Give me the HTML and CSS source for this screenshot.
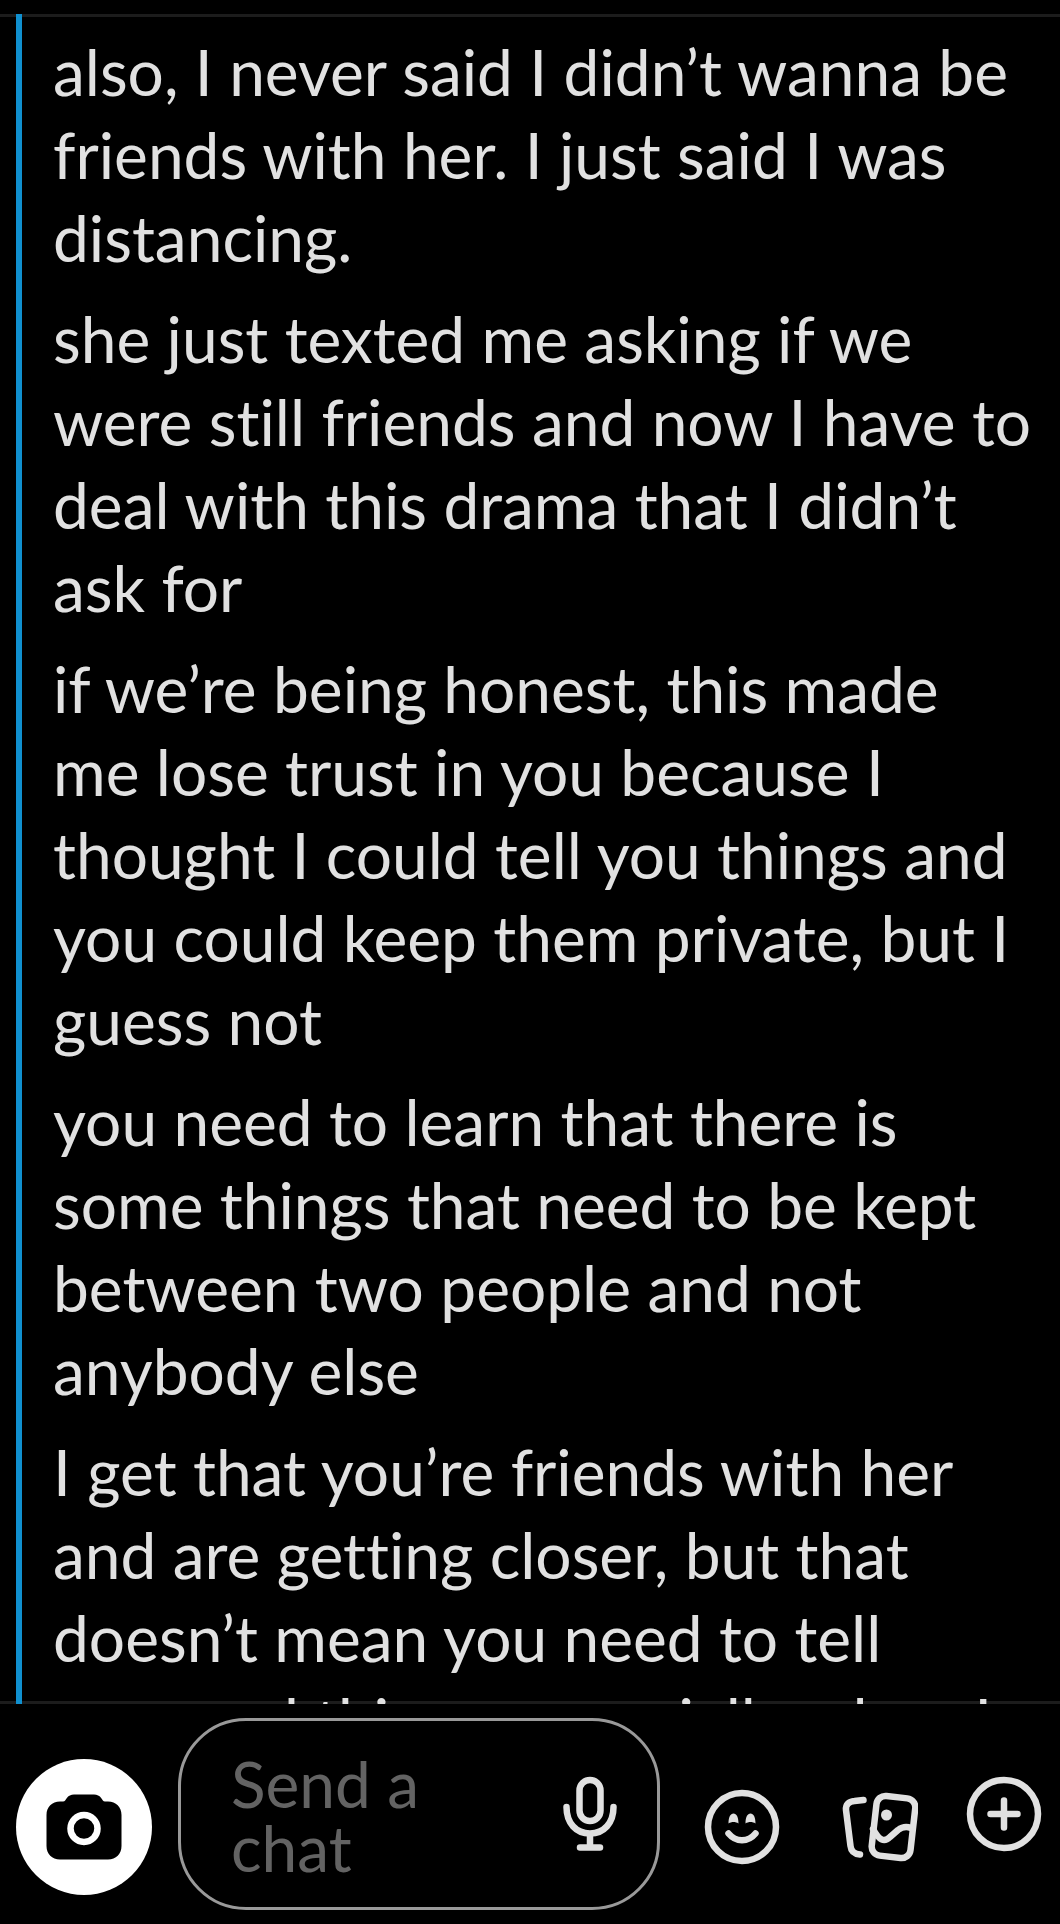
FILE: index.html
```html
<!DOCTYPE html>
<html lang="en">
<head>
    <meta charset="UTF-8">
    <meta name="viewport" content="width=device-width, initial-scale=1.0">
    <title>Chat</title>
    <link rel="stylesheet" href="styles.css">
</head>
<body>
    <main class="thread">
        <div class="messages">
            <p>also, I never said I didn’t wanna be<br>friends with her. I just said I was<br>distancing.</p>
            <p>she just texted me asking if we<br>were still friends and now I have to<br>deal with this drama that I didn’t<br>ask for</p>
            <p>if we’re being honest, this made<br>me lose trust in you because I<br>thought I could tell you things and<br>you could keep them private, but I<br>guess not</p>
            <p>you need to learn that there is<br>some things that need to be kept<br>between two people and not<br>anybody else</p>
            <p>I get that you’re friends with her<br>and are getting closer, but that<br>doesn’t mean you need to tell<br>your and things, especially when I</p>
        </div>
    </main>
    <form class="composer">
        <button type="button" class="camera-button low" aria-label="Camera">
            <svg width="76" height="66" viewBox="0 0 76 66">
                <path d="M14 7.500H17C19 7.500 19.500 6 20.500 4.500C22.500 1.500 25 .5 28 .5H48C51 .5 53.500 1.500 55.500 4.500C56.500 6 57 7.500 59 7.500H62C70 7.500 75.500 13 75.500 21V52C75.500 60 70 65.500 62 65.500H14C6 65.500 .5 60 .5 52V21C.5 13 6 7.500 14 7.500Z" fill="#000"/>
                <circle cx="38" cy="34.500" r="13.500" fill="none" stroke="#fff" stroke-width="6.500"/>
            </svg>
        </button>
        <div class="chat-box">
            <textarea class="chat-input" rows="2" placeholder="Send a chat" aria-label="Send a chat"></textarea>
            <button type="button" class="icon-button mic-button" aria-label="Voice note">
                <svg width="54" height="76" viewBox="0 0 54 76">
                    <rect x="16.500" y="4" width="21" height="41" rx="10.500"/>
                    <path d="M3.500 31C3.500 47 13 57.500 27 57.500S50.500 47 50.500 31M27 58V71M17 71.500H37"/>
                </svg>
            </button>
        </div>
        <div class="actions">
            <div class="media-actions low">
                <button type="button" class="icon-button" aria-label="Emoji">
                    <svg width="76" height="76" viewBox="0 0 76 76">
                        <circle cx="38" cy="38" r="34"/>
                        <path d="M24.500 44.500C32 53.500 44 53.500 51.500 44.500"/>
                        <path class="solid" d="M24.500 34.500C24.500 28 26.500 24.500 29.500 24.500S34.500 28 34.500 34.500C31.500 32.500 27.500 32.500 24.500 34.500ZM41.500 34.500C41.500 28 43.500 24.500 46.500 24.500S51.500 28 51.500 34.500C48.500 32.500 44.500 32.500 41.500 34.500Z"/>
                    </svg>
                </button>
                <button type="button" class="icon-button" aria-label="Stickers">
                    <svg width="76" height="76" viewBox="0 0 76 76">
                        <path d="M21.500 11L12.500 12C6.500 12.500 3.500 16 4 21L8.500 57C9 62 12 65 18 65.500"/>
                        <rect x="32" y="8" width="39" height="60" rx="9" transform="rotate(6.500 51.500 38)"/>
                        <path d="M31 40C37 51 42 54 48 48L56 41C60 38 64 37 69 39"/>
                        <circle class="solid" cx="44.500" cy="26" r="5.500"/>
                    </svg>
                </button>
            </div>
            <button type="button" class="icon-button" aria-label="More">
                <svg width="76" height="76" viewBox="0 0 76 76">
                    <circle cx="38" cy="38" r="34"/>
                    <path d="M38 24.500V51.500M24.500 38H51.500"/>
                </svg>
            </button>
        </div>
    </form>
</body>
</html>
```
FILE: styles.css
```css
* {
    box-sizing: border-box;
}
body {
    margin: 0;
    padding-top: 14px;
    height: 100vh;
    display: flex;
    flex-direction: column;
    background: #000;
    color: #e1e1e1;
    font-family: Lato, "Open Sans", sans-serif;
    font-variant-ligatures: none;
}
.thread {
    flex: 1;
    min-height: 0;
    overflow: hidden;
    padding-left: 16px;
    box-shadow: inset 0 3px #1c1c1c, inset 0 -3px #1c1c1c;
}
.messages {
    display: flex;
    flex-direction: column;
    gap: 18px;
    padding: 16px 0 0 31px;
    border-left: 6px solid #1090cf;
    font-size: 64px;
    line-height: 83px;
    white-space: nowrap;
}
.messages p {
    margin: 0;
}
.composer {
    display: flex;
    align-items: center;
    gap: 26px;
    padding: 14px 18px 14px 16px;
}
button {
    display: flex;
    align-items: center;
    justify-content: center;
    padding: 0;
    border: none;
    background: none;
    cursor: pointer;
}
.low {
    margin-top: 26px;
}
.camera-button {
    flex: none;
    width: 136px;
    height: 136px;
    border-radius: 50%;
    background: #fff;
}
.chat-box {
    flex: 1;
    min-width: 0;
    display: flex;
    align-items: center;
    padding: 28px 40px 28px 50px;
    border: 3px solid #999;
    border-radius: 68px;
}
.chat-input {
    flex: 1;
    min-width: 0;
    height: 130px;
    padding: 3px 0 0;
    border: none;
    outline: none;
    resize: none;
    overflow: hidden;
    background: none;
    color: #e1e1e1;
    font-family: inherit;
    font-size: 64px;
    line-height: 64px;
}
.chat-input::placeholder {
    color: #636363;
    opacity: 1;
}
.mic-button {
    margin-left: 60px;
}
.icon-button svg {
    display: block;
    fill: none;
    stroke: #e1e1e1;
    stroke-width: 6.5;
    stroke-linecap: round;
    stroke-linejoin: round;
}
.icon-button .solid {
    fill: #e1e1e1;
    stroke: none;
}
.actions {
    display: flex;
    align-items: center;
    gap: 48px;
    margin-left: 18px;
}
.media-actions {
    display: flex;
    gap: 62px;
}
```
